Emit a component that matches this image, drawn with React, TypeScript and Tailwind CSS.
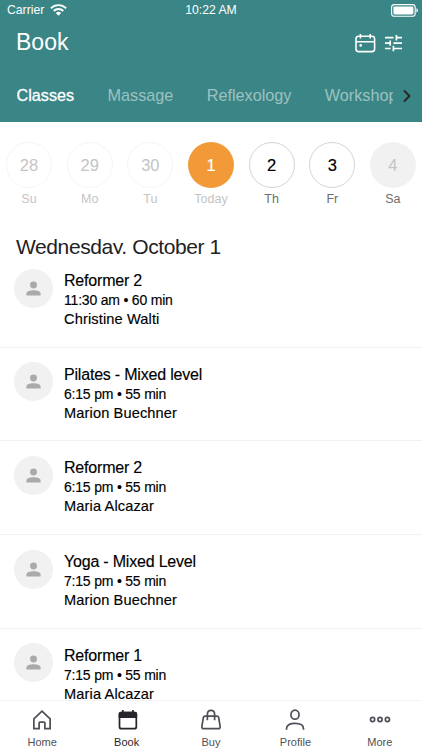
import React from 'react';
import { ChevronRight } from 'lucide-react';

interface Day {
  date: string;
  label: string;
  circle: string;
  text: string;
}

interface ClassItem {
  name: string;
  time: string;
  teacher: string;
}

const PAST = 'border border-[#f5f5f5] text-[#c4c4c4]';
const OPEN = 'border border-[#d4d4d4] text-black [-webkit-text-stroke:0.2px]';

const days: Day[] = [
  { date: '28', label: 'Su', circle: PAST, text: 'text-[#c4c4c4]' },
  { date: '29', label: 'Mo', circle: PAST, text: 'text-[#c4c4c4]' },
  { date: '30', label: 'Tu', circle: PAST, text: 'text-[#c4c4c4]' },
  { date: '1', label: 'Today', circle: 'bg-[#f19a37] text-white [-webkit-text-stroke:0.2px]', text: 'text-[#c4c4c4]' },
  { date: '2', label: 'Th', circle: OPEN, text: 'text-[#6e6e6e]' },
  { date: '3', label: 'Fr', circle: OPEN, text: 'text-[#6e6e6e]' },
  { date: '4', label: 'Sa', circle: 'bg-[#f1f1f1] text-[#c4c4c4]', text: 'text-[#6e6e6e]' },
];

const classes: ClassItem[] = [
  { name: 'Reformer 2', time: '11:30 am • 60 min', teacher: 'Christine Walti' },
  { name: 'Pilates - Mixed level', time: '6:15 pm • 55 min', teacher: 'Marion Buechner' },
  { name: 'Reformer 2', time: '6:15 pm • 55 min', teacher: 'Maria Alcazar' },
  { name: 'Yoga - Mixed Level', time: '7:15 pm • 55 min', teacher: 'Marion Buechner' },
  { name: 'Reformer 1', time: '7:15 pm • 55 min', teacher: 'Maria Alcazar' },
];

const StatusBar = () => (
  <div className="grid h-5 grid-cols-3 items-center pl-[7px] pr-1">
    <div className="flex items-center gap-[6px]">
      <span className="text-[12.2px]">Carrier</span>
      <svg width="17" height="12" viewBox="0 0 17 12" fill="none" stroke="currentColor" strokeWidth="1.9">
        <path d="M.9 4.2a10.9 10.9 0 0 1 15.2 0" />
        <path d="M3.7 7a6.9 6.9 0 0 1 9.6 0" />
        <path d="M8.5 11.7 5.8 9a3.8 3.8 0 0 1 5.4 0z" fill="currentColor" stroke="none" />
      </svg>
    </div>
    <span className="-ml-[3px] text-center text-[12.2px]">10:22 AM</span>
    <svg className="justify-self-end" width="27" height="13" viewBox="0 0 27 13" fill="none">
      <rect x=".6" y=".6" width="23.6" height="11.6" rx="2.8" stroke="currentColor" strokeWidth="1.1" />
      <rect x="2.4" y="2.4" width="20" height="8" rx="1.3" fill="currentColor" />
      <path d="M25.4 4.2v4.4c.9-.4 1.5-1.2 1.5-2.2s-.6-1.8-1.5-2.2z" fill="currentColor" />
    </svg>
  </div>
);

const Header = () => (
  <header className="h-[122px] shrink-0 bg-[#3a8585] text-white">
    <StatusBar />
    <div className="flex h-[45px] items-center justify-between pl-4 pr-5">
      <h1 className="text-[23px]">Book</h1>
      <div className="flex items-center gap-[9px]">
        <svg width="21" height="20" viewBox="0 0 21 20" fill="none" stroke="currentColor" strokeWidth="1.6">
          <rect x="1" y="3.2" width="18.6" height="15.4" rx="2.6" />
          <path d="M1 8.8h18.6M5.4 1v4.6M15.2 1v4.6" />
          <circle cx="5.7" cy="12.4" r="1.3" fill="currentColor" stroke="none" />
        </svg>
        <svg width="17" height="18" viewBox="0 0 17 18" fill="none" stroke="currentColor" strokeWidth="1.7">
          <path d="M0 3.7h8.5M11.4 3.7H17M11.4 1v5.4M0 9.1h5.2M8.4 9.1H17M5.2 6.4v5.4M0 14.5h5.6M8.4 14.5H17M8.4 11.8v5.4" />
        </svg>
      </div>
    </div>
    <nav className="flex h-[57px] items-center pl-[16.5px] pr-2 pt-[4px] text-[16.2px]">
      <div className="flex w-[376.5px] shrink-0 gap-[33.5px] overflow-hidden whitespace-nowrap">
        <span className="[-webkit-text-stroke:0.3px]">Classes</span>
        <span className="text-white/50">Massage</span>
        <span className="text-white/50">Reflexology</span>
        <span className="text-white/50">Workshops</span>
      </div>
      <ChevronRight className="ml-[4px] size-5 shrink-0 text-[#262a2c]" strokeWidth={2.5} />
    </nav>
  </header>
);

const Avatar = () => (
  <div className="flex size-[39px] shrink-0 items-center justify-center rounded-full bg-[#f1f1f1]">
    <svg width="15" height="15" viewBox="0 0 16 16" fill="#aaa">
      <circle cx="8" cy="4.2" r="3.7" />
      <path d="M.4 15.4v-1.8C.4 11 4 9.9 8 9.9s7.6 1.1 7.6 3.7v1.8z" />
    </svg>
  </div>
);

const TabItem = ({ label, active, children }: { label: string; active?: boolean; children: React.ReactNode }) => (
  <div className={`flex flex-1 flex-col items-center pt-[7.5px] ${active ? 'text-[#24262b]' : 'text-[#4e5058]'}`}>
    <svg width="26" height="26" viewBox="0 0 26 26" fill="none" stroke="currentColor" strokeWidth="1.9">
      {children}
    </svg>
    <span className="mt-[2px] text-[11px] leading-4">{label}</span>
  </div>
);

const TabBar = () => (
  <nav className="flex h-[50px] shrink-0 border-t border-[#f3f3f3] bg-white">
    <TabItem label="Home">
      <path d="M4 10.8 13 2.4l9 8.4v10.8h-5.8v-6a1 1 0 0 0-1-1h-4.4a1 1 0 0 0-1 1v6H4z" />
    </TabItem>
    <TabItem label="Book" active>
      <rect x="4.7" y="4" width="18.6" height="17.7" rx="2.2" />
      <path d="M4.7 9V5.4q0-1.4 1.4-1.4h15.8q1.4 0 1.4 1.4V9z" fill="currentColor" />
      <path d="M8.4 1.2V5M19.6 1.2V5" />
    </TabItem>
    <TabItem label="Buy">
      <path d="M6.6 8h12.8q1.8 0 2.1 1.6l1.6 9.6q.3 2.6-2.1 2.6H5q-2.4 0-2.1-2.6l1.6-9.6Q4.8 8 6.6 8z" />
      <path d="M9 12.5V6q0-4.4 4-4.4T17 6v6.5" />
    </TabItem>
    <TabItem label="Profile">
      <ellipse cx="13" cy="6.3" rx="4.5" ry="5" />
      <path d="M3.6 23v-1.200q0-6 9.400-6t9.400 6V23" />
    </TabItem>
    <TabItem label="More">
      <circle cx="4.8" cy="11.6" r="2.3" />
      <circle cx="13" cy="11.6" r="2.3" />
      <circle cx="21.2" cy="11.6" r="2.3" />
    </TabItem>
  </nav>
);

export default function App() {
  return (
    <div className="flex h-[750px] w-[422px] flex-col overflow-hidden bg-white font-['Liberation_Sans',Arial,sans-serif] text-black">
      <Header />

      <div className="flex shrink-0 justify-between px-[6px] pt-[19.5px]">
        {days.map((day) => (
          <div key={day.label} className="flex w-[46px] flex-col items-center">
            <div className={`flex size-[46px] items-center justify-center rounded-full pt-px text-[16.5px] ${day.circle}`}>
              {day.date}
            </div>
            <span className={`mt-px text-[12.5px] leading-5 ${day.text}`}>{day.label}</span>
          </div>
        ))}
      </div>

      <h2 className="mt-[27.5px] h-[18px] shrink-0 overflow-hidden pl-4 text-[21px] leading-[22px] tracking-[-0.4px] text-[#222]">
        Wednesday, October 1
      </h2>

      <main className="min-h-0 flex-1 overflow-hidden">
        {classes.map((item, i) => (
          <div key={i} className="flex h-[93.7px] gap-[11px] border-b border-[#f1f1f1] pl-[14px] pt-[14.7px]">
            <Avatar />
            <div className="-mt-[0.8px] [-webkit-text-stroke:0.15px]">
              <div className="text-[16px] leading-[26px] tracking-[-0.2px]">{item.name}</div>
              <div className="text-[14px] leading-[13px] tracking-[-0.2px]">{item.time}</div>
              <div className="text-[14.6px] leading-[24px] tracking-[0.13px]">{item.teacher}</div>
            </div>
          </div>
        ))}
      </main>

      <TabBar />
    </div>
  );
}
